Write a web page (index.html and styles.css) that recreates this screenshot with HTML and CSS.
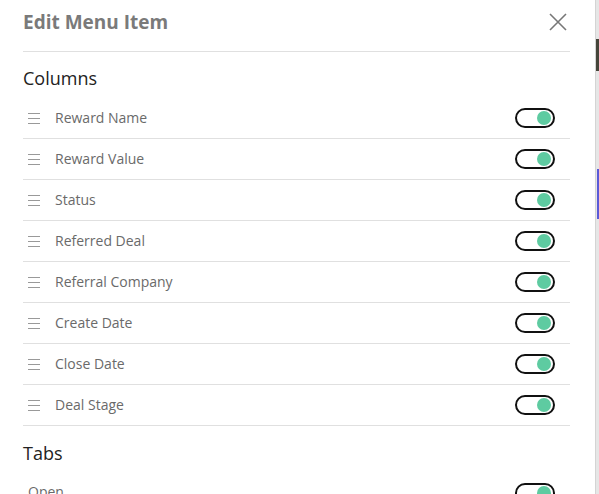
FILE: index.html
```html
<!DOCTYPE html>
<html lang="en">
<head>
    <meta charset="UTF-8">
    <meta name="viewport" content="width=device-width, initial-scale=1.0">
    <title>Edit Menu Item</title>
    <link rel="stylesheet" href="styles.css">
</head>
<body>
    <div class="page">
        <aside class="edit-panel">
            <header class="panel-header">
                <h1>Edit Menu Item</h1>
                <button class="close-btn" aria-label="Close">
                    <svg width="18" height="18" viewBox="0 0 18 18">
                        <path d="M1 1 L17 17 M17 1 L1 17" stroke="#777" stroke-width="1.6" fill="none"/>
                    </svg>
                </button>
            </header>

            <h2 class="section-title">Columns</h2>
            <ul class="item-list">
                <li class="item-row">
                    <span class="drag-handle"><i></i><i></i><i></i></span>
                    <span class="item-label">Reward Name</span>
                    <span class="toggle on"></span>
                </li>
                <li class="item-row">
                    <span class="drag-handle"><i></i><i></i><i></i></span>
                    <span class="item-label">Reward Value</span>
                    <span class="toggle on"></span>
                </li>
                <li class="item-row">
                    <span class="drag-handle"><i></i><i></i><i></i></span>
                    <span class="item-label">Status</span>
                    <span class="toggle on"></span>
                </li>
                <li class="item-row">
                    <span class="drag-handle"><i></i><i></i><i></i></span>
                    <span class="item-label">Referred Deal</span>
                    <span class="toggle on"></span>
                </li>
                <li class="item-row">
                    <span class="drag-handle"><i></i><i></i><i></i></span>
                    <span class="item-label">Referral Company</span>
                    <span class="toggle on"></span>
                </li>
                <li class="item-row">
                    <span class="drag-handle"><i></i><i></i><i></i></span>
                    <span class="item-label">Create Date</span>
                    <span class="toggle on"></span>
                </li>
                <li class="item-row">
                    <span class="drag-handle"><i></i><i></i><i></i></span>
                    <span class="item-label">Close Date</span>
                    <span class="toggle on"></span>
                </li>
                <li class="item-row">
                    <span class="drag-handle"><i></i><i></i><i></i></span>
                    <span class="item-label">Deal Stage</span>
                    <span class="toggle on"></span>
                </li>
            </ul>

            <h2 class="section-title tabs-title">Tabs</h2>
            <ul class="item-list">
                <li class="item-row tab-row">
                    <span class="item-label">Open</span>
                    <span class="toggle on"></span>
                </li>
            </ul>
        </aside>

        <div class="backdrop">
            <div class="backdrop-photo"></div>
            <div class="backdrop-accent"></div>
        </div>
    </div>
</body>
</html>
```

FILE: styles.css
```css
:root {
    --text-dark: #222;
    --text-muted: #6a6a6a;
    --title-gray: #7a7a7a;
    --border-gray: #e0e0e0;
    --toggle-green: #5ecba1;
}

body {
    margin: 0;
    padding: 0;
    font-family: 'Open Sans', 'Noto Sans', sans-serif;
    background: #e6e6e6;
    overflow: hidden;
}

.page {
    display: flex;
    height: 494px;
}

.edit-panel {
    width: 547px;
    flex-shrink: 0;
    background: white;
    padding: 0 25px 0 23px;
    border-right: 1px solid #d4d4d4;
}

.panel-header {
    display: flex;
    justify-content: space-between;
    align-items: center;
    height: 44px;
    border-bottom: 1px solid var(--border-gray);
    padding-bottom: 7px;
}

.panel-header h1 {
    margin: 0;
    font-size: 19px;
    font-weight: 700;
    color: var(--title-gray);
}

.close-btn {
    background: none;
    border: none;
    padding: 0;
    margin-right: 3px;
    cursor: pointer;
    display: flex;
}

.section-title {
    margin: 0;
    padding: 14px 0 8px;
    font-size: 18px;
    font-weight: 400;
    color: var(--text-dark);
}

.tabs-title {
    padding-top: 15px;
}

.item-list {
    list-style: none;
    margin: 0;
    padding: 0;
}

.item-row {
    display: flex;
    align-items: center;
    height: 40px;
    border-bottom: 1px solid var(--border-gray);
}

.drag-handle {
    display: flex;
    flex-direction: column;
    gap: 4px;
    width: 12px;
    margin: 0 15px 0 5px;
}

.drag-handle i {
    display: block;
    height: 1px;
    background: #999;
}

.item-label {
    flex: 1;
    font-size: 14px;
    color: var(--text-muted);
    padding-bottom: 2px;
}

.tab-row {
    border-bottom: none;
    padding-left: 5px;
}

.tab-row .item-label {
    padding-bottom: 4px;
}

.toggle {
    position: relative;
    width: 36px;
    height: 16px;
    border: 2px solid #111;
    border-radius: 12px;
    margin-right: 15px;
}

.toggle.on::after {
    content: "";
    position: absolute;
    top: 1px;
    right: 2px;
    width: 14px;
    height: 14px;
    border-radius: 50%;
    background: var(--toggle-green);
}

.backdrop {
    flex: 1;
    display: flex;
    flex-direction: column;
    background: #e6e6e6;
}

.backdrop-photo {
    height: 32px;
    margin-top: 39px;
    background: #45453a;
}

.backdrop-accent {
    height: 50px;
    width: 2px;
    margin: 98px 0 0 auto;
    background: #5a5ad8;
}
```
